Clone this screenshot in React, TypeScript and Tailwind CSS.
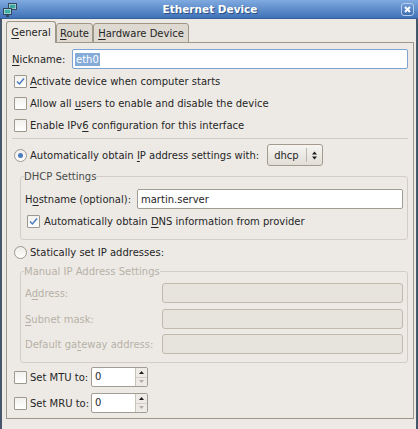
import React from 'react';

const M = ({ c }: { c: string }) => <span className='underline underline-offset-[2px]'>{c}</span>;

function Check({ checked }: { checked?: boolean }) {
  return (
    <span className='flex h-[13px] w-[13px] shrink-0 items-center justify-center rounded-[1px] border border-[#9d988e] bg-gradient-to-b from-[#f2f1ee] to-white'>
      {checked && (
        <svg width='9' height='9' viewBox='0 0 9 9'>
          <path d='M1 4.5 L3.4 7 L8 1.5' fill='none' stroke='#4b7cc0' strokeWidth='1.5' />
        </svg>
      )}
    </span>
  );
}

function Radio({ checked }: { checked?: boolean }) {
  return (
    <span className='flex h-[13px] w-[13px] shrink-0 items-center justify-center rounded-full border border-[#9d988e] bg-gradient-to-b from-[#eeece8] to-white'>
      {checked && <span className='h-[5px] w-[5px] rounded-full bg-[#4b7cc0]' />}
    </span>
  );
}

function Spin() {
  return (
    <div className='flex h-[20px] w-[57px] shrink-0 overflow-hidden rounded-[2px] border border-[#a29d92] bg-white'>
      <span className='flex-1 pl-[3px] leading-[18px]'>0</span>
      <div className='flex w-[12px] flex-col border-l border-[#c9c4ba] bg-[#eeebe6]'>
        <div className='flex flex-1 items-center justify-center border-b border-[#d3cfc7]'>
          <svg width='5' height='3' viewBox='0 0 5 3'>
            <path d='M0 3 L2.5 0 L5 3 Z' fill='#1c1c1c' />
          </svg>
        </div>
        <div className='flex flex-1 items-center justify-center'>
          <svg width='5' height='3' viewBox='0 0 5 3'>
            <path d='M0 0 L2.5 3 L5 0 Z' fill='#b3aea5' />
          </svg>
        </div>
      </div>
    </div>
  );
}

function DisabledInput() {
  return <div className='h-[20px] flex-1 rounded-[3px] border border-[#c0b9ac] bg-[#e7e4de]' />;
}

export default function App() {
  return (
    <div className="flex h-[429px] w-[418px] flex-col overflow-hidden bg-[#edeae5] font-['DejaVu_Sans',sans-serif] text-[10px] leading-[13px] text-[#262626]">
      {/* title bar */}
      <div className='relative flex h-[19px] shrink-0 items-center justify-center border-b border-[#35609c] bg-gradient-to-b from-[#80aae0] to-[#3f72b7]'>
        <svg className='absolute left-[3px] top-[3px]' width='14' height='14' viewBox='0 0 14 14'>
          <rect x='5.5' y='0.5' width='8' height='6' fill='#dfe6ee' stroke='#33465c' />
          <rect x='6.5' y='1.5' width='6' height='4' fill='#3aa6a0' />
          <rect x='0.5' y='5.5' width='8' height='6' fill='#dfe6ee' stroke='#33465c' />
          <rect x='1.5' y='6.5' width='6' height='4' fill='#3fb3a6' />
          <rect x='3' y='12' width='3' height='2' fill='#33465c' />
        </svg>
        <span className='ml-[2px] text-[10.5px] font-bold text-white [text-shadow:1px_1px_0_#2c4f82]'>Ethernet Device</span>
        <div className='absolute right-[4px] top-[3px] flex h-[13px] w-[13px] items-center justify-center rounded-[3px] border border-[#b4cdec] bg-gradient-to-b from-[#6f9bd7] to-[#3f6fb2]'>
          <svg width='7' height='7' viewBox='0 0 7 7'>
            <path d='M1 1 L6 6 M6 1 L1 6' stroke='white' strokeWidth='2' />
          </svg>
        </div>
      </div>

      <div className='flex flex-1 flex-col border-x-2 border-[#46576c] pl-[4px] pr-[2px] pt-[2px]'>
        {/* tabs */}
        <div className='relative z-10 -mb-px flex h-[22px] items-end'>
          <div className='flex h-[22px] w-[50px] items-center justify-center rounded-t-[3px] border border-b-0 border-[#9e9888] bg-[#edeae5] pb-[1px]'>
            <span>
              <M c='G' />
              eneral
            </span>
          </div>
          <div className='flex h-[20px] w-[37px] items-center justify-center rounded-t-[3px] border border-[#9e9888] bg-[#dedad2]'>
            <span>
              <M c='R' />
              oute
            </span>
          </div>
          <div className='flex h-[20px] w-[96px] items-center justify-center rounded-t-[3px] border border-[#9e9888] bg-[#dedad2]'>
            <span>
              <M c='H' />
              ardware Device
            </span>
          </div>
        </div>

        {/* panel */}
        <div className='flex flex-col border border-[#9e9888] px-[5px] pb-[4px]'>
          <div className='mt-[5px] flex h-[22px] items-center'>
            <span className='w-[60px] shrink-0'>
              <M c='N' />
              ickname:
            </span>
            <div className='flex h-[20px] flex-1 items-center rounded-[2px] border border-[#7ea4d3] bg-white pl-[2px]'>
              <span className='bg-[#86abd9] px-[1px] text-white'>eth0</span>
            </div>
          </div>

          <div className='flex h-[22px] items-center gap-[3px] pl-[2px]'>
            <Check checked />
            <span>
              <M c='A' />
              ctivate device when computer starts
            </span>
          </div>
          <div className='flex h-[22px] items-center gap-[3px] pl-[2px]'>
            <Check />
            <span>
              Allow all <M c='u' />
              sers to enable and disable the device
            </span>
          </div>
          <div className='flex h-[22px] items-center gap-[3px] pl-[2px]'>
            <Check />
            <span>
              Enable IPv<M c='6' /> configuration for this interface
            </span>
          </div>

          <div className='mt-[2px] h-px bg-[#d2cdc4]' />

          <div className='mt-[5px] flex h-[22px] items-center gap-[3px] pl-[2px]'>
            <Radio checked />
            <span>
              Automatically obtain <M c='I' />P address settings with:
            </span>
            <div className='ml-[5px] flex h-[22px] w-[56px] items-center rounded-[3px] border border-[#a39c8e] bg-gradient-to-b from-[#f6f5f2] to-[#e2ded7]'>
              <span className='flex-1 pl-[6px]'>dhcp</span>
              <span className='h-[14px] w-px bg-[#bdb7ab]' />
              <svg className='mx-[5px]' width='5' height='9' viewBox='0 0 5 9'>
                <path d='M0 3.5 L2.5 0.5 L5 3.5 Z M0 5.5 L2.5 8.5 L5 5.5 Z' fill='#1c1c1c' />
              </svg>
            </div>
          </div>

          <fieldset className='ml-[8px] mt-[4px] rounded-[3px] border border-[#d3cec5] pb-[7px] pl-[4px] pr-[4px]'>
            <legend className='-ml-[1px] text-[#4a4a4a]'>DHCP Settings</legend>
            <div className='mt-[5px] flex h-[22px] items-center'>
              <span className='w-[112px] shrink-0'>
                H<M c='o' />
                stname (optional):
              </span>
              <div className='flex h-[20px] flex-1 items-center rounded-[2px] border border-[#a29d92] bg-white pl-[3px]'>
                martin.server
              </div>
            </div>
            <div className='flex h-[22px] items-center gap-[4px] pl-[2px]'>
              <Check checked />
              <span>
                Automatically obtain <M c='D' />
                NS information from provider
              </span>
            </div>
          </fieldset>

          <div className='mt-[1px] flex h-[22px] items-center gap-[3px] pl-[2px]'>
            <Radio />
            <span>Statically set IP addresses:</span>
          </div>

          <fieldset className='ml-[8px] mt-[2px] rounded-[3px] border border-[#d3cec5] pb-[7px] pl-[4px] pr-[4px] text-[#b6b1a7]'>
            <legend className='-ml-[1px]'>Manual IP Address Settings</legend>
            <div className='mt-[4px] flex h-[22px] items-center'>
              <span className='w-[137px] shrink-0'>
                A<M c='d' />
                dress:
              </span>
              <DisabledInput />
            </div>
            <div className='mt-[4px] flex h-[22px] items-center'>
              <span className='w-[137px] shrink-0'>
                <M c='S' />
                ubnet mask:
              </span>
              <DisabledInput />
            </div>
            <div className='mt-[3px] flex h-[22px] items-center'>
              <span className='w-[137px] shrink-0'>
                Default ga<M c='t' />
                eway address:
              </span>
              <DisabledInput />
            </div>
          </fieldset>

          <div className='mt-[3px] flex h-[22px] items-center pl-[2px]'>
            <Check />
            <span className='ml-[3px] w-[61px] shrink-0'>Set MTU to:</span>
            <Spin />
          </div>
          <div className='mt-[4px] flex h-[22px] items-center pl-[2px]'>
            <Check />
            <span className='ml-[3px] w-[61px] shrink-0'>Set MRU to:</span>
            <Spin />
          </div>
        </div>
      </div>
    </div>
  );
}
